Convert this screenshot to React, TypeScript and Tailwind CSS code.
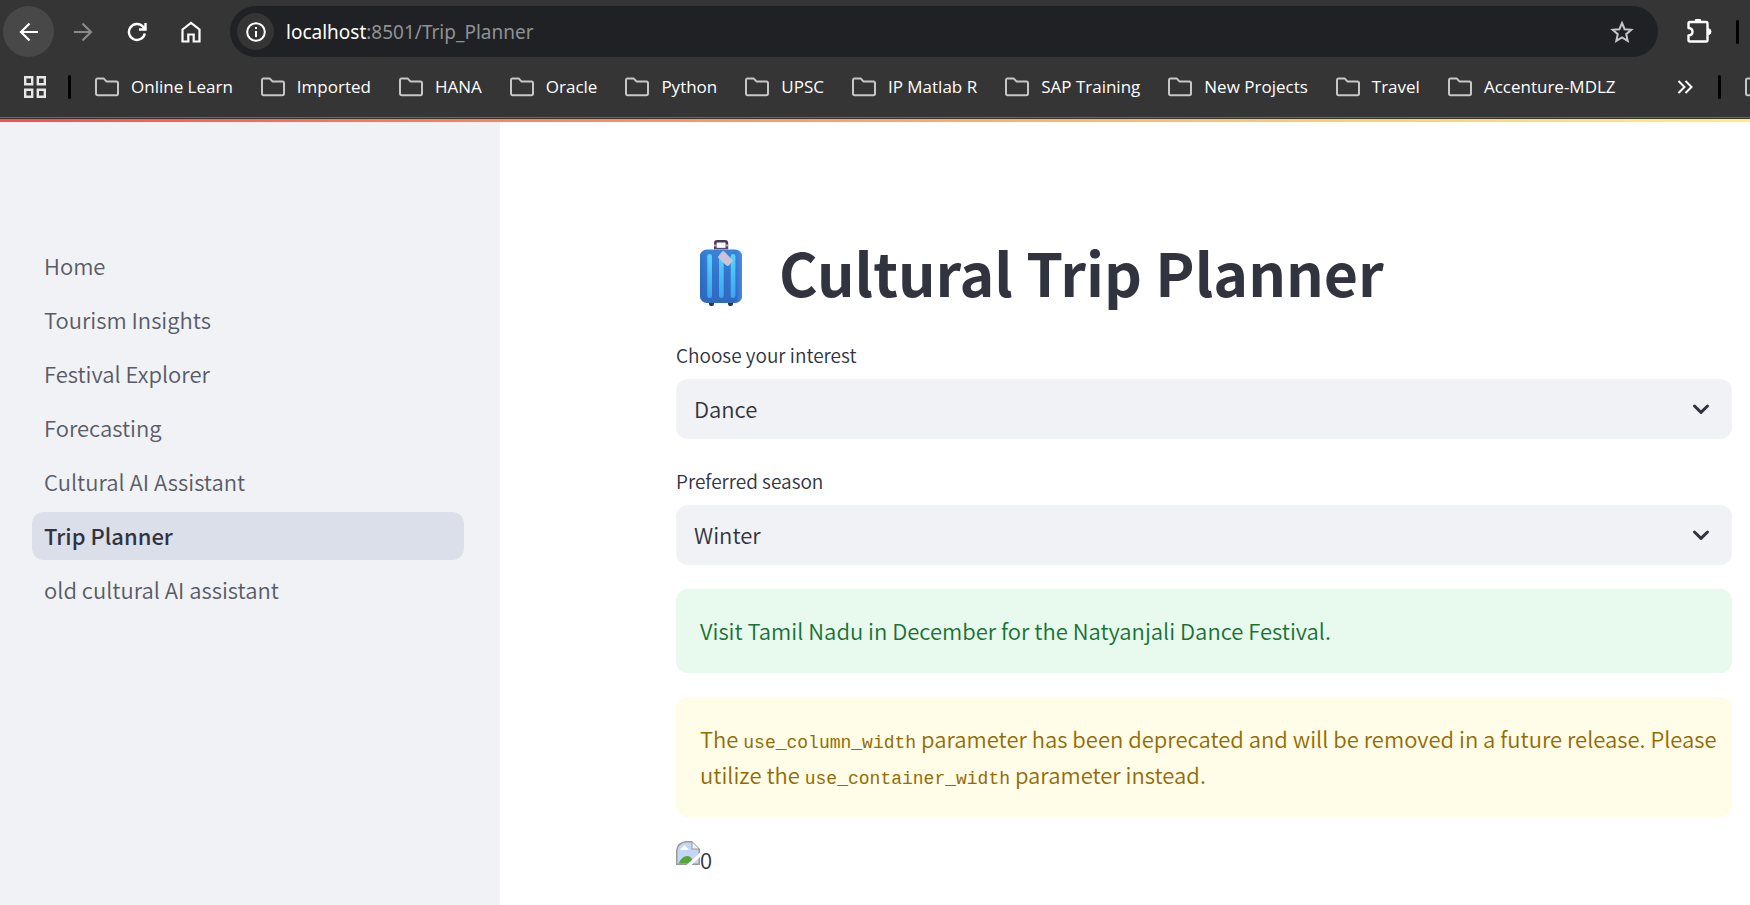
import type { ReactNode } from "react";

const bookmarks = [
  "Online Learn",
  "Imported",
  "HANA",
  "Oracle",
  "Python",
  "UPSC",
  "IP Matlab R",
  "SAP Training",
  "New Projects",
  "Travel",
  "Accenture-MDLZ",
];

const pages = [
  "Home",
  "Tourism Insights",
  "Festival Explorer",
  "Forecasting",
  "Cultural AI Assistant",
  "Trip Planner",
  "old cultural AI assistant",
];

function IconButton({ label, className = "", children }: { label: string; className?: string; children: ReactNode }) {
  return (
    <button type="button" aria-label={label} className={`flex shrink-0 items-center justify-center rounded-full ${className}`}>
      {children}
    </button>
  );
}

function FolderIcon() {
  return (
    <svg viewBox="0 0 24 20" className="h-5 w-6 shrink-0" fill="none" stroke="#c7c7c7" strokeWidth="2" strokeLinejoin="round">
      <path d="M1 3.2C1 2 1.600 1.400 2.600 1.400H8.600L11.400 4.400H21.400C22.400 4.400 23 5 23 6V16.600C23 17.600 22.400 18.200 21.400 18.200H2.600C1.600 18.200 1 17.600 1 16.600Z" />
    </svg>
  );
}

function Divider() {
  return <span className="h-6 w-[3px] shrink-0 rounded-full bg-black" />;
}

function Suitcase() {
  return (
    <svg viewBox="0 0 44 68" className="h-[68px] w-11 shrink-0" role="img" aria-label="Suitcase">
      <defs>
        <linearGradient id="shell" x1="0" y1="0" x2="0" y2="1">
          <stop offset="0" stopColor="#3b83da" />
          <stop offset="0.5" stopColor="#3273c9" />
          <stop offset="1" stopColor="#2f68c0" />
        </linearGradient>
        <linearGradient id="rib" x1="0" y1="0" x2="0" y2="1">
          <stop offset="0" stopColor="#56d6fb" />
          <stop offset="1" stopColor="#3fa2f2" />
        </linearGradient>
        <linearGradient id="edge" x1="0" y1="0" x2="1" y2="0">
          <stop offset="0" stopColor="#2b62bb" stopOpacity="0.5" />
          <stop offset="0.15" stopColor="#2b62bb" stopOpacity="0" />
          <stop offset="0.85" stopColor="#4b90e6" stopOpacity="0" />
          <stop offset="1" stopColor="#4b90e6" stopOpacity="0.8" />
        </linearGradient>
      </defs>
      <rect x="10" y="61" width="5" height="6" rx="2" fill="#3b2a48" />
      <rect x="29" y="61" width="5" height="6" rx="2" fill="#3b2a48" />
      <path d="M16.300 10V4.200Q16.300 2.300 18.200 2.300H26Q27.900 2.300 27.900 4.200V10" fill="none" stroke="#4c3a58" strokeWidth="2.600" />
      <path d="M15 6.500H17.600M26.600 6.500H29.200" stroke="#b9aabf" strokeWidth="2" />
      <path d="M15 9.600H29" stroke="#5b4866" strokeWidth="1.500" />
      <rect x="1" y="10.500" width="42" height="53.500" rx="7" fill="url(#shell)" />
      <rect x="1" y="10.500" width="42" height="53.500" rx="7" fill="url(#edge)" />
      <rect x="8.300" y="15" width="4.700" height="44" rx="2.300" fill="url(#rib)" />
      <rect x="20" y="15" width="4.700" height="44" rx="2.300" fill="url(#rib)" />
      <rect x="31.700" y="15" width="4.700" height="44" rx="2.300" fill="url(#rib)" />
      <path d="M23 12.500Q24.300 11.500 25.500 12.800L33.300 20.700Q34.200 21.800 33.300 22.800L29.600 26.700Q28.500 27.500 27.400 26.600L18.700 18.200Z" fill="#cdc3d8" />
    </svg>
  );
}

function BrokenImage() {
  return (
    <svg viewBox="0 0 24 24" className="h-6 w-6 shrink-0" aria-hidden="true">
      <path d="M0 24V9Q1 1 10 0H16L24 8V24Z" fill="#9a9a9a" />
      <path d="M1.500 22.500V9Q2.500 2.500 10 1.500H15.500V8.500H22.500V22.500Z" fill="#c3d6f7" />
      <path d="M16.500 1.500V7.500H22.500Z" fill="#f4f4f4" />
      <path d="M4 9Q4 7 6 7Q6.500 4.500 8.500 4.500Q10.500 4.500 11 7Q12.500 7 12.500 9Z" fill="#fff" />
      <path d="M2.500 22.500Q6 14.500 12 15Q16 15.500 18 22.500Z" fill="#57a639" />
      <path d="M10.500 24L24 11.500V16L15.500 24Z" fill="#fff" />
    </svg>
  );
}

function Code({ children }: { children: string }) {
  return <code className="font-['Liberation_Mono',monospace] text-[18px] leading-none">{children}</code>;
}

function SelectField({ id, label, options }: { id: string; label: string; options: string[] }) {
  return (
    <div className="flex flex-col">
      <label htmlFor={id} className="mb-[6px] text-[19px] leading-9">
        {label}
      </label>
      <div className="relative">
        <select id={id} className="h-15 w-full appearance-none rounded-xl bg-[#f0f2f6] pr-14 pb-[2px] pl-[18px] text-[22px] outline-none">
          {options.map((o) => (
            <option key={o}>{o}</option>
          ))}
        </select>
        <svg viewBox="0 0 24 24" className="pointer-events-none absolute top-[18px] right-[19px] h-6 w-6" fill="none" stroke="#31333f" strokeWidth="3" strokeLinecap="round" strokeLinejoin="round">
          <path d="M5.500 9L12 15.300L18.500 9" />
        </svg>
      </div>
    </div>
  );
}

export default function App() {
  return (
    <div className="flex min-h-screen flex-col overflow-x-hidden bg-white font-['Noto_Sans_CJK_SC',sans-serif] font-[350] text-[#31333f]">
      <header className="border-b border-[#353535] bg-[#353535] font-['Open_Sans',sans-serif] font-normal text-white">
        <div className="flex items-center pt-[6px] pr-[11px] pl-[3px]">
          <IconButton label="Back" className="h-[51px] w-[51px] bg-[#484848]">
            <svg viewBox="0 0 20 20" className="h-5 w-5" fill="none" stroke="#fff" strokeWidth="2.200">
              <path d="M19 10H2.500M10.500 1.500L2 10L10.500 18.500" />
            </svg>
          </IconButton>
          <IconButton label="Forward" className="ml-[3px] h-[51px] w-[51px]">
            <svg viewBox="0 0 20 20" className="h-5 w-5" fill="none" stroke="#8a8a8a" strokeWidth="2.200">
              <path d="M1 10H17.500M9.500 1.500L18 10L9.500 18.500" />
            </svg>
          </IconButton>
          <IconButton label="Reload" className="ml-[3px] h-[51px] w-[51px]">
            <svg viewBox="0 0 20 20" className="h-5 w-5" fill="none" stroke="#fff" strokeWidth="2.400">
              <path d="M17.800 11.500A8 8 0 1 1 16 4.700L18.500 7.200" />
              <path d="M18.500 1V7.500H12" />
            </svg>
          </IconButton>
          <IconButton label="Home" className="ml-[3px] h-[51px] w-[51px]">
            <svg viewBox="0 0 20 22" className="h-[22px] w-5" fill="none" stroke="#fff" strokeWidth="2.200">
              <path d="M1.500 8.500L10 2L18.500 8.500V20.500H12.700V13.500H7.300V20.500H1.500Z" />
            </svg>
          </IconButton>
          <div className="ml-[14px] flex h-[51px] min-w-0 flex-1 items-center rounded-full bg-[#202124] pr-5 pl-[7px]">
            <IconButton label="Site information" className="h-[37px] w-[37px] bg-[#353535]">
              <svg viewBox="0 0 20 20" className="h-5 w-5" fill="none" stroke="#fff" strokeWidth="2">
                <circle cx="10" cy="10" r="8.800" />
                <path d="M10 9V15M10 5V7" />
              </svg>
            </IconButton>
            <p className="ml-3 flex-1 font-['Noto_Sans',sans-serif] text-[19px] leading-6 text-[#8f9194]">
              <span className="text-white">localhost</span>:8501/Trip_Planner
            </p>
            <IconButton label="Bookmark this page" className="h-8 w-8">
              <svg viewBox="0 0 24 24" className="h-6 w-6" fill="none" stroke="#c4c6c9" strokeWidth="2">
                <path d="M12 3L14.600 9.200L21.300 9.800L16.200 14.200L17.700 20.800L12 17.300L6.300 20.800L7.800 14.200L2.700 9.800L9.400 9.200Z" />
              </svg>
            </IconButton>
          </div>
          <IconButton label="Extensions" className="ml-[25px] h-8 w-8">
            <svg viewBox="0 1 26 26" className="h-[26px] w-[26px]" fill="none" stroke="#fff" strokeWidth="2.400" strokeLinejoin="round">
              <path d="M4 4H20Q21.500 4 21.500 5.500V22Q21.500 23.500 20 23.500H4Q2.500 23.500 2.500 22V17.500Q6.500 17 6.500 13.700Q6.500 10.500 2.500 10V5.500Q2.500 4 4 4Z" />
              <path d="M9 3.500A3 3 0 0 1 15 3.500ZM22 10.700A3 3 0 0 1 22 16.700Z" fill="#fff" strokeWidth="1" />
            </svg>
          </IconButton>
          <span className="ml-[21px] flex">
            <Divider />
          </span>
        </div>
        <div className="flex h-[61px] items-center overflow-hidden border-b border-[#6a6a6a] pb-[1px] pl-[23px]">
          <IconButton label="Apps" className="h-6 w-6">
            <svg viewBox="0 0 24 24" className="h-6 w-6" fill="none" stroke="#e6e6e6" strokeWidth="2.400">
              <path d="M2.200 2.200H9.200V9.200H2.200ZM14.800 2.200H21.800V9.200H14.800ZM2.200 14.800H9.200V21.800H2.200ZM14.800 14.800H21.800V21.800H14.800Z" />
            </svg>
          </IconButton>
          <span className="ml-[21px] flex">
            <Divider />
          </span>
          <nav aria-label="Bookmarks" className="ml-6 flex flex-1 items-center gap-7">
            {bookmarks.map((b) => (
              <a key={b} href="#" className="flex shrink-0 items-center gap-3 text-[17px] leading-6">
                <FolderIcon />
                {b}
              </a>
            ))}
          </nav>
          <IconButton label="More bookmarks" className="h-6 w-6">
            <svg viewBox="0 0 16 14" className="h-[14px] w-4" fill="none" stroke="#fff" strokeWidth="2">
              <path d="M1.500 1L7.500 7L1.500 13M8.500 1L14.500 7L8.500 13" />
            </svg>
          </IconButton>
          <span className="ml-[21px] flex">
            <Divider />
          </span>
          <span className="ml-6 flex w-[5px] overflow-hidden">
            <FolderIcon />
          </span>
        </div>
      </header>
      <div className="h-[3px] bg-linear-to-r from-[#ff4b4b] to-[#fff070]" />
      <div className="flex flex-1">
        <aside className="w-125 shrink-0 bg-[#f0f2f6] pt-30 pr-9 pl-8">
          <nav aria-label="Pages" className="flex flex-col gap-[6px]">
            {pages.map((p) => (
              <a
                key={p}
                href="#"
                aria-current={p === "Trip Planner" ? "page" : undefined}
                className={`flex h-12 items-center rounded-xl px-3 pb-[2px] text-[22px] ${
                  p === "Trip Planner" ? "bg-[#dbdfea] font-medium" : "text-[#595b66]"
                }`}
              >
                {p}
              </a>
            ))}
          </nav>
        </aside>
        <main className="flex min-w-0 flex-1 flex-col pt-[104px] pr-[18px] pl-44">
          <h1 className="flex items-center gap-9 pl-[23px] text-[59px] leading-[92px] font-bold">
            <Suitcase />
            <span className="pb-[2px]">Cultural Trip Planner</span>
          </h1>
          <div className="mt-[17px] flex flex-col gap-6">
            <SelectField id="interest" label="Choose your interest" options={["Dance", "Music", "Art"]} />
            <SelectField id="season" label="Preferred season" options={["Winter", "Summer", "Monsoon"]} />
            <p className="rounded-xl bg-[#e8f9ee] pt-[23px] pr-2 pb-[25px] pl-6 text-[22px] leading-9 text-[#177233]">
              Visit Tamil Nadu in December for the Natyanjali Dance Festival.
            </p>
            <p className="rounded-xl bg-[#fffce7] pt-[23px] pr-2 pb-[25px] pl-6 text-[22px] leading-9 text-[#926c05]">
              The <Code>use_column_width</Code> parameter has been deprecated and will be removed in a future release. Please utilize the{" "}
              <Code>use_container_width</Code> parameter instead.
            </p>
            <div className="flex text-[22px] leading-9">
              <BrokenImage />
              <span>0</span>
            </div>
          </div>
        </main>
      </div>
    </div>
  );
}
